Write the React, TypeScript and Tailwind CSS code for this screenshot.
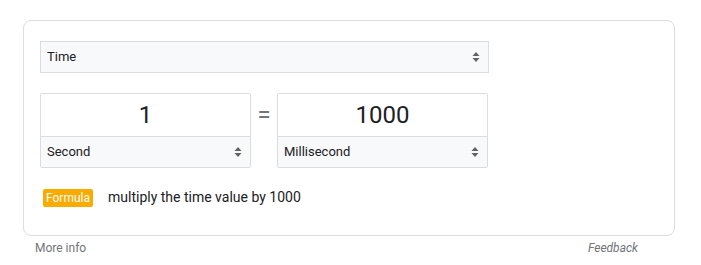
import React from 'react';

const Arrows: React.FC = () => (
  <svg width="8" height="12" viewBox="0 0 8 12" className="shrink-0">
    <path d="M4 1 L7.5 5 H0.5 Z" fill="#5f6368" />
    <path d="M4 11 L7.5 7 H0.5 Z" fill="#5f6368" />
  </svg>
);

const UnitBox: React.FC<{ value: string; unit: string }> = ({ value, unit }) => (
  <div className="w-[211px] h-[75px] border border-[#dadce0] rounded-[2px] flex flex-col">
    <div className="h-[43px] flex items-center justify-center text-[24px] text-[#202124] border-b border-[#dadce0] bg-white">
      {value}
    </div>
    <div className="flex-1 flex items-center justify-between pl-[6px] pr-[8px] bg-[#f8f9fa] text-[13px] text-[#202124]">
      <span>{unit}</span>
      <Arrows />
    </div>
  </div>
);

const App: React.FC = () => {
  return (
    <div className="w-[701px] h-[265px] bg-white pt-[20px] pl-[23px]" style={{ fontFamily: 'Roboto, Arial, sans-serif' }}>
      <div className="w-[652px] h-[216px] border border-[#dadce0] rounded-[8px] pt-[20px] pl-[16px]">
        <div className="w-[449px] h-[32px] border border-[#dadce0] bg-[#f8f9fa] flex items-center justify-between pl-[6px] pr-[8px] text-[13px] text-[#202124]">
          <span>Time</span>
          <Arrows />
        </div>
        <div className="flex items-start mt-[20px]">
          <UnitBox value="1" unit="Second" />
          <div className="w-[26px] h-[43px] flex items-center justify-center text-[24px] text-[#70757a]">=</div>
          <UnitBox value="1000" unit="Millisecond" />
        </div>
        <div className="flex items-center mt-[19px] pl-[3px]">
          <span className="bg-[#f9ab00] text-white text-[12px] leading-[18px] px-[3px] rounded-[2px]">Formula</span>
          <span className="ml-[15px] text-[14px] text-[#202124]">multiply the time value by 1000</span>
        </div>
      </div>
      <div className="w-[615px] flex justify-between items-center mt-[3px] pl-[12px] text-[12px] text-[#70757a]">
        <span>More info</span>
        <span className="italic">Feedback</span>
      </div>
    </div>
  );
};

export default App;
